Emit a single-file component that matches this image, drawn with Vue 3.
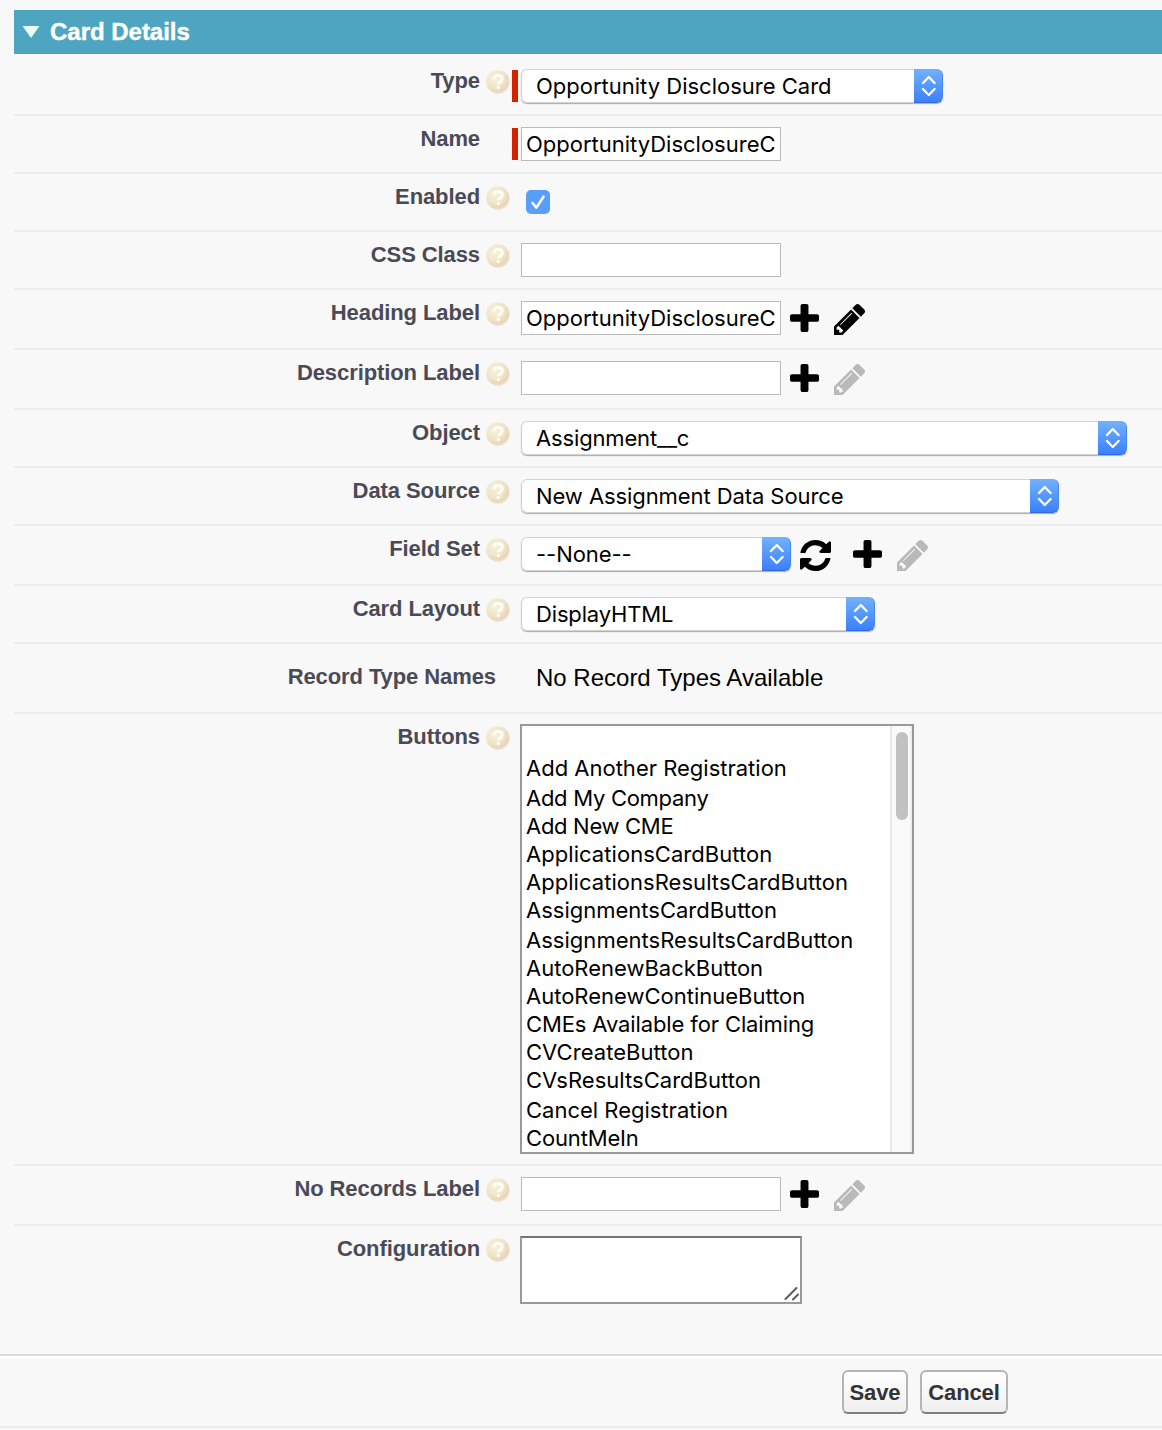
<script setup>
const rows = [
  { label: 'Type', h: 62, first: true, help: true, required: true, kind: 'select', value: 'Opportunity Disclosure Card', w: 422, ls: 0 },
  { label: 'Name', h: 58, required: true, kind: 'input', value: 'OpportunityDisclosureC' },
  { label: 'Enabled', h: 58, help: true, kind: 'check' },
  { label: 'CSS Class', h: 58, help: true, kind: 'input', value: '' },
  { label: 'Heading Label', h: 60, help: true, kind: 'input', value: 'OpportunityDisclosureC', icons: true, active: true },
  { label: 'Description Label', h: 60, help: true, kind: 'input', value: '', icons: true },
  { label: 'Object', h: 58, help: true, kind: 'select', value: 'Assignment__c', w: 606, ls: -0.15 },
  { label: 'Data Source', h: 58, help: true, kind: 'select', value: 'New Assignment Data Source', w: 538, ls: -0.08 },
  { label: 'Field Set', h: 60, help: true, kind: 'select', value: '--None--', w: 270, ls: -0.05, refresh: true, icons: true },
  { label: 'Card Layout', h: 58, help: true, kind: 'select', value: 'DisplayHTML', w: 354, ls: -0.15 },
  { label: 'Record Type Names', h: 70, kind: 'text', value: 'No Record Types Available' },
  { label: 'Buttons', h: 452, help: true, kind: 'list' },
  { label: 'No Records Label', h: 60, help: true, kind: 'input', value: '', icons: true },
  { label: 'Configuration', h: 128, help: true, kind: 'area', last: true }
]
const options = [
  { t: '', ls: 0 },
  { t: 'Add Another Registration', ls: 0 },
  { t: 'Add My Company', ls: -0.28 },
  { t: 'Add New CME', ls: -0.3 },
  { t: 'ApplicationsCardButton', ls: 0.05 },
  { t: 'ApplicationsResultsCardButton', ls: 0.04 },
  { t: 'AssignmentsCardButton', ls: 0 },
  { t: 'AssignmentsResultsCardButton', ls: 0.03 },
  { t: 'AutoRenewBackButton', ls: 0 },
  { t: 'AutoRenewContinueButton', ls: 0 },
  { t: 'CMEs Available for Claiming', ls: -0.12 },
  { t: 'CVCreateButton', ls: 0.05 },
  { t: 'CVsResultsCardButton', ls: 0.03 },
  { t: 'Cancel Registration', ls: 0 },
  { t: 'CountMeIn', ls: -0.15 }
]
const spaced = [2, 7, 13]
</script>

<template>
  <div class="page">
    <header class="head">
      <svg class="tri" width="18" height="14" viewBox="0 0 18 14"><path d="M.5 1h17L9 13z" fill="#e9fbfb" /></svg>
      <h3>Card Details</h3>
    </header>
    <div
      v-for="r in rows"
      :key="r.label"
      class="row"
      :class="{ first: r.first, last: r.last, plain: r.kind === 'text' }"
      :style="{ height: r.h + 'px' }"
    >
      <label class="label">{{ r.label }}</label>
      <div class="help">
        <svg v-if="r.help" width="24" height="24" viewBox="0 0 24 24">
          <defs>
            <radialGradient id="ball" cx=".38" cy=".34" r=".7">
              <stop offset="0" stop-color="#f5f0d4" />
              <stop offset=".5" stop-color="#f1e8cc" />
              <stop offset=".8" stop-color="#e9d8b9" />
              <stop offset="1" stop-color="#ecdccd" />
            </radialGradient>
          </defs>
          <circle cx="12" cy="12" r="11.700" fill="url(#ball)" stroke="#f3ece3" stroke-width=".8" />
          <path d="M7.900 9.300c0-5.200 8.400-5 8.400-.5 0 2.900-3.900 2.800-3.900 5.500" fill="none" stroke="#fffef8" stroke-width="3" />
          <circle cx="12.300" cy="17.500" r="1.700" fill="#fffef8" />
        </svg>
      </div>
      <div class="req"><i v-if="r.required"></i></div>

      <div v-if="r.kind === 'select'" class="select" :style="{ width: r.w + 'px', letterSpacing: r.ls + 'px' }">
        <span>{{ r.value }}</span>
        <div class="stepper">
          <svg width="15" height="22" viewBox="0 0 15 22" fill="none" stroke="#fff" stroke-width="2.300" stroke-linecap="round" stroke-linejoin="round">
            <path d="M2 8l5.800-6 5.800 6M2 14l5.800 6 5.800-6" />
          </svg>
        </div>
      </div>
      <div v-else-if="r.kind === 'input'" class="input">{{ r.value }}</div>
      <div v-else-if="r.kind === 'check'" class="check">
        <svg width="24" height="24" viewBox="0 0 24 24"><path d="m6.500 13 3.900 4.600L17.600 6.500" fill="none" stroke="#fff" stroke-width="2.500" stroke-linecap="round" stroke-linejoin="round" /></svg>
      </div>
      <div v-else-if="r.kind === 'text'" class="text">{{ r.value }}</div>
      <div v-else-if="r.kind === 'list'" class="list">
        <ul>
          <li v-for="(o, i) in options" :key="i" :class="{ spaced: spaced.includes(i) }" :style="{ letterSpacing: o.ls + 'px' }">{{ o.t }}</li>
        </ul>
        <div class="track"><div class="thumb"></div></div>
      </div>
      <div v-else class="area">
        <svg width="15" height="15" viewBox="0 0 15 15" stroke="#5c5c5c" stroke-width="2" stroke-linecap="round"><path d="M1.500 13 12.500 2M9 13.500l5-5" /></svg>
      </div>

      <svg v-if="r.refresh" class="refresh" width="31" height="31" viewBox="128 128 1536 1536"><path d="M1639 1056q0 5-1 7-64 268-268 434.500t-478 166.500q-146 0-282.500-55t-243.500-157l-129 129q-19 19-45 19t-45-19-19-45v-448q0-26 19-45t45-19h448q26 0 45 19t19 45-19 45l-137 137q71 66 161 102t187 36q134 0 250-65t186-179q11-17 53-117 8-23 30-23h192q13 0 22.500 9.500t9.500 22.500zm25-800v448q0 26-19 45t-45 19h-448q-26 0-45-19t-19-45 19-45l138-138q-148-137-349-137-134 0-250 65t-186 179q-11 17-53 117-8 23-30 23h-199q-13 0-22.500-9.500t-9.500-22.500v-7q65-268 270-434.500t480-166.500q146 0 284 55.500t245 156.500l130-129q19-19 45-19t45 19 19 45z" /></svg>
      <template v-if="r.icons">
        <svg class="plus" :class="{ far: r.refresh }" width="29" height="28" viewBox="192 128 1408 1408" preserveAspectRatio="none"><path d="M1600 736v192q0 40-28 68t-68 28h-416v416q0 40-28 68t-68 28h-192q-40 0-68-28t-28-68v-416h-416q-40 0-68-28t-28-68v-192q0-40 28-68t68-28h416v-416q0-40 28-68t68-28h192q40 0 68 28t28 68v416h416q40 0 68 28t28 68z" /></svg>
        <svg class="pencil" :class="{ dim: !r.active }" width="31" height="31" viewBox="128 149 1515 1515"><path d="M491 1536l91-91-235-235-91 91v107h128v128h107zm523-928q0-22-22-22-10 0-17 7l-542 542q-7 7-7 17 0 22 22 22 10 0 17-7l542-542q7-7 7-17zm-54-192l416 416-832 832h-416v-416zm683 96q0 53-37 90l-166 166-416-416 166-165q36-38 90-38 53 0 91 38l235 234q37 39 37 91z" /></svg>
      </template>
    </div>
    <footer class="foot">
      <button>Save</button>
      <button class="cancel">Cancel</button>
    </footer>
  </div>
</template>

<style>
body { background: #f8f8f8; }
</style>
<style scoped>
* { box-sizing: border-box; }
.page { width: 1162px; height: 1430px; overflow: hidden; background: #f8f8f8; font: 22px/28px Inter, sans-serif; color: #000; }
.head { margin: 10px 0 0 14px; height: 44px; background: #4da5c2; display: flex; align-items: center; color: #fff; padding-left: 8px; }
.page::before { content: ''; display: table; }
.tri { margin-right: 10px; }
h3 { margin: 0; font: bold 24px/28px "Liberation Sans", Arial, sans-serif; letter-spacing: -.02px; -webkit-text-stroke: .4px #fff; }
.row { margin-left: 14px; border-bottom: 2px solid #ececec; display: flex; align-items: flex-start; padding-top: 11px; }
.first { padding-top: 15px; }
.last { border-bottom: 0; }
.label { width: 466px; text-align: right; font: bold 22px/24px "Liberation Sans", Arial, sans-serif; letter-spacing: -.09px; color: #4a4a56; white-space: nowrap; }
.help { width: 30px; padding: 1px 0 0 6px; height: 26px; }
.help svg { display: block; }
.req { width: 11px; padding: 1px 0 0 2px; }
.req i { display: block; width: 6px; height: 32px; background: #d42100; }
.select { height: 34px; border-radius: 6px; background: #fff; box-shadow: 0 0 0 1px #d2d2d2 inset, 0 1px 1px #aaa; display: flex; justify-content: space-between; align-items: center; padding-left: 15px; white-space: nowrap; overflow: hidden; flex: none; }
.stepper { width: 29px; height: 34px; background: linear-gradient(#72b2fb, #3b80fb); border-bottom: 1px solid #3269df; border-right: 1px solid #4a86ec; border-radius: 0 6px 6px 0; display: flex; align-items: center; justify-content: center; }
.input { width: 260px; height: 34px; background: #fff; border: 1px solid #bbb; padding-left: 4px; line-height: 32px; overflow: hidden; white-space: nowrap; }
.check { width: 24px; height: 24px; margin: 5px 0 0 5px; border-radius: 5px; background: #579ffb; }
.check svg { display: block; }
.plain { padding-top: 21px; }
.plain .label { width: 482px; }
.plain .help { width: 14px; padding: 0; }
.text { padding-left: 15px; font: 24px/26px "Liberation Sans", Arial, sans-serif; white-space: nowrap; }
.list { width: 394px; height: 430px; border: 2px solid #999; background: #fff; margin: -1px 0 0 -1px; display: flex; justify-content: space-between; }
ul { list-style: none; margin: 0; padding: 0 0 0 4px; white-space: nowrap; }
li { height: 28px; line-height: 28px; }
.spaced { margin-top: 2px; }
.track { width: 22px; border-left: 2px solid #e8e8e8; border-right: 2px solid #eee; background: #fafafa; padding: 6px 0 0 4px; }
.thumb { width: 12px; height: 88px; border-radius: 6px; background: #c1c1c1; }
.area { width: 282px; height: 68px; border: 2px solid #999; border-top-color: #757575; background: #fff; margin: -1px 0 0 -1px; display: flex; align-items: flex-end; justify-content: flex-end; padding: 0 1px 1px 0; }
.plus { margin: 3px 0 0 9px; flex: none; }
.pencil { margin: 3px 0 0 15px; flex: none; }
.refresh { margin: 3px 0 0 9px; flex: none; }
.far { margin-left: 22px; }
.dim { fill: #b9b9b9; }
.foot { height: 74px; border-top: 2px solid #d9d9d9; border-bottom: 2px solid #ececec; box-shadow: inset 0 2px #fff; padding: 14px 0 0 842px; display: flex; gap: 12px; }
button { width: 66px; height: 44px; border: 2px solid #b5b5b5; border-bottom-color: #7f7f7f; border-radius: 6px; background: linear-gradient(#fff, #efefef); padding: 2px 0 0; font: bold 22px/38px "Liberation Sans", Arial, sans-serif; letter-spacing: -.1px; color: #333; }
.cancel { width: 88px; }
</style>
